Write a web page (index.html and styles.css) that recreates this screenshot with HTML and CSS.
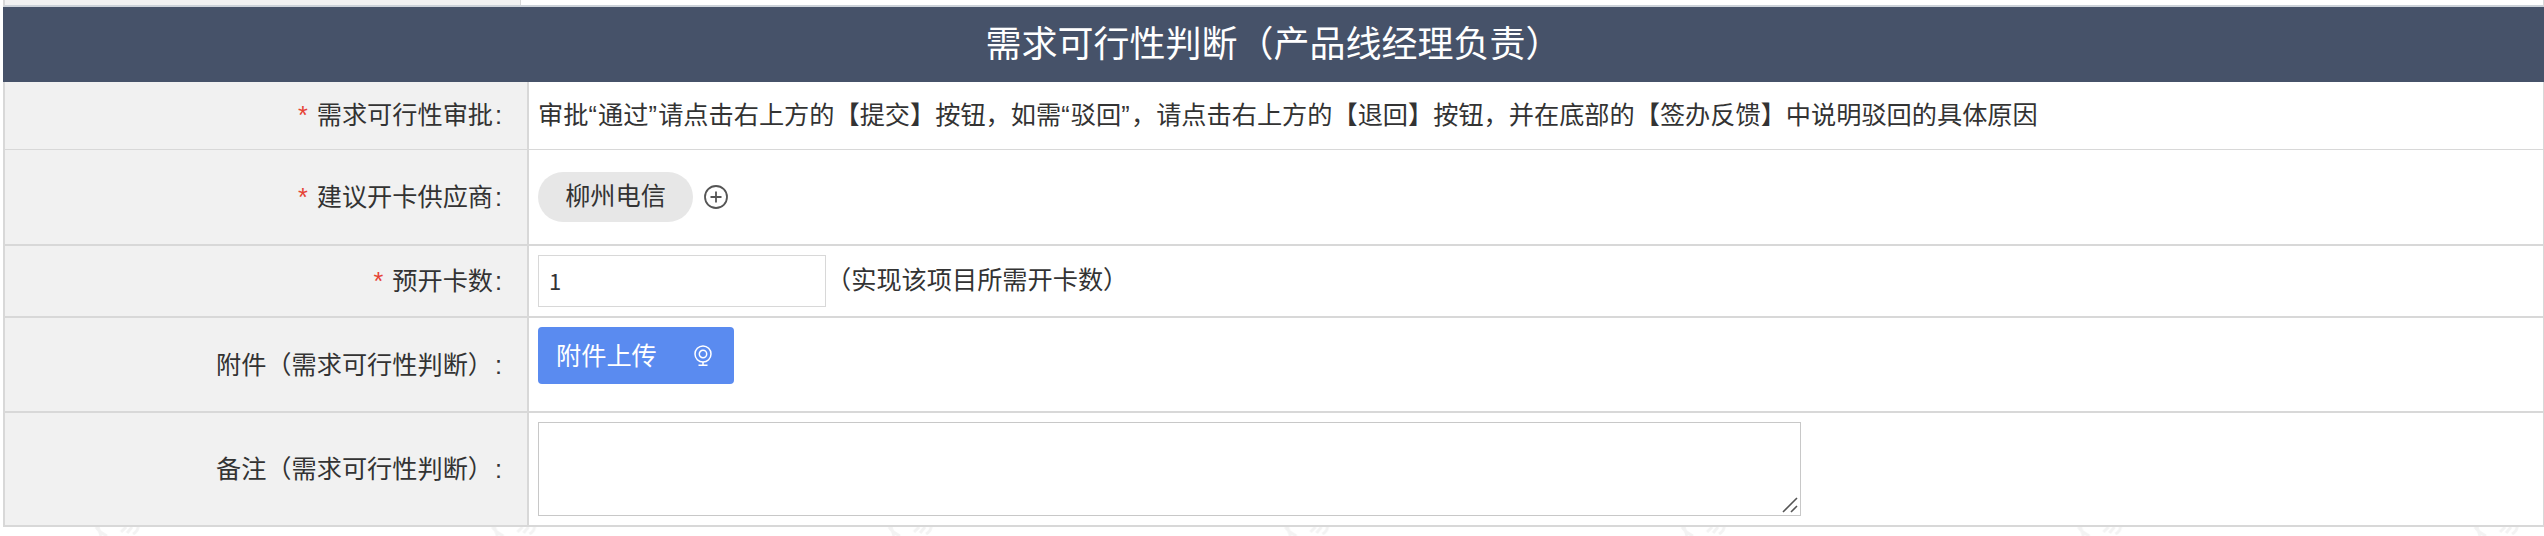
FILE: index.html
```html
<!DOCTYPE html>
<html lang="zh-CN">
<head>
<meta charset="utf-8">
<title>需求可行性判断</title>
<link rel="stylesheet" href="styles.css">
</head>
<body>
<div class="form">
  <div class="prev"><div class="prev-label"></div><div class="prev-value"></div></div>
  <div class="title">需求可行性判断（产品线经理负责）</div>
  <div class="row row-approve">
    <div class="label"><span class="req">*</span><span class="name">需求可行性审批</span><span class="colon">:</span></div>
    <div class="value"><span class="hint">审批<span class="q">“</span>通过<span class="q">”</span>请点击右上方的【提交】按钮，如需<span class="q">“</span>驳回<span class="q">”</span>，请点击右上方的【退回】按钮，并在底部的【签办反馈】中说明驳回的具体原因</span></div>
  </div>
  <div class="row row-supplier">
    <div class="label"><span class="req">*</span><span class="name">建议开卡供应商</span><span class="colon">:</span></div>
    <div class="value">
      <span class="tag">柳州电信</span>
      <svg class="plus" viewBox="0 0 24 24"><circle cx="12" cy="12" r="11"/><path d="M12 6.500v11M6.500 12h11"/></svg>
    </div>
  </div>
  <div class="row row-count">
    <div class="label"><span class="req">*</span><span class="name">预开卡数</span><span class="colon">:</span></div>
    <div class="value"><div class="input">1</div><span class="note">（实现该项目所需开卡数）</span></div>
  </div>
  <div class="row row-file">
    <div class="label"><span class="name">附件（需求可行性判断）</span><span class="colon">:</span></div>
    <div class="value">
      <div class="upload"><span>附件上传</span>
        <svg class="cam" viewBox="0 0 18 22"><circle cx="9" cy="9" r="8"/><circle cx="9" cy="9" r="3.700"/><path d="M9 17v3M4.500 20.300h9"/></svg>
      </div>
    </div>
  </div>
  <div class="row row-remark">
    <div class="label"><span class="name">备注（需求可行性判断）</span><span class="colon">:</span></div>
    <div class="value">
      <div class="textarea"><svg class="grip" viewBox="0 0 16 16"><path d="M1 15L15 1M9 15l6-6"/></svg></div>
    </div>
  </div>
</div>
<svg class="watermark" width="2544" height="9">
  <defs><pattern id="wm" width="396.500" height="9" patternUnits="userSpaceOnUse">
    <path d="M96 0q3 5 11 9M98 0l3 9M121 5l5-5M127 6l5-6M133 7q5-3 5-7"/>
  </pattern></defs>
  <rect width="2544" height="9" fill="url(#wm)"/>
</svg>
</body>
</html>
```
FILE: styles.css
```css
* { box-sizing: border-box; }
body {
  margin: 0;
  width: 2544px;
  height: 536px;
  overflow: hidden;
  background: #fff;
  color: #333;
  font: 25.2px/36px "Liberation Sans", "Noto Sans CJK SC", sans-serif;
}
.form { width: 2541px; margin-left: 3px; }
.prev {
  display: flex;
  height: 7px;
  border: solid #d8d8d8;
  border-width: 0 1px 2px 2px;
  border-bottom-color: #ccd2d9;
}
.prev-label { width: 516px; background: #f1f1f1; border-right: 1px solid #d8d8d8; }
.title {
  height: 75px;
  background: #465269;
  color: #fff;
  font-size: 36px;
  line-height: 75px;
  text-align: center;
}
.row {
  display: flex;
  border: solid #d8d8d8;
  border-width: 0 1px 2px 2px;
}
.row-approve { height: 68px; border-bottom-width: 1px; }
.row-supplier { height: 96px; }
.row-count { height: 72px; }
.row-file { height: 95px; }
.row-remark { height: 114px; }
.label {
  width: 524px;
  flex: none;
  display: flex;
  align-items: center;
  justify-content: flex-end;
  padding-right: 25px;
  background: #f1f1f1;
  border-right: 2px solid #d8d8d8;
}
.row-approve .label, .row-approve .value { padding-bottom: 2px; }
.req { color: #e64335; margin-right: 9px; }
.colon { width: 9px; text-align: right; }
.value { flex: 1; display: flex; align-items: center; padding-left: 9px; }
.q { letter-spacing: 1.3px; }
.tag {
  width: 155px;
  height: 50px;
  border-radius: 25px;
  background: #e7e7e7;
  line-height: 48px;
  text-align: center;
}
.plus { width: 24px; height: 24px; margin-left: 11px; fill: none; stroke: #555; stroke-width: 1.8; }
.input {
  width: 288px;
  height: 52px;
  border: 1px solid #d8d8d8;
  padding-left: 10px;
  line-height: 49px;
  font-family: "Noto Sans CJK SC", sans-serif;
  font-size: 22px;
}
.note { padding-bottom: 3px; }
.row-file .value, .row-remark .value { align-items: flex-start; padding-top: 9px; }
.upload {
  width: 196px;
  height: 57px;
  display: flex;
  align-items: center;
  justify-content: space-between;
  padding: 0 22px 0 18px;
  border-radius: 4px;
  background: #5a8bf0;
  color: #fff;
}
.cam { width: 18px; height: 22px; fill: none; stroke: #fff; stroke-width: 1.5; }
.textarea {
  width: 1263px;
  height: 94px;
  border: 1px solid #c8c8c8;
  display: flex;
  align-items: flex-end;
  justify-content: flex-end;
  padding: 2px;
}
.grip { width: 16px; height: 16px; fill: none; stroke: #555; stroke-width: 1.6; }
.watermark { display: block; fill: none; stroke: #f3f3f3; stroke-width: 3; }
.watermark rect { stroke: none; }
```
